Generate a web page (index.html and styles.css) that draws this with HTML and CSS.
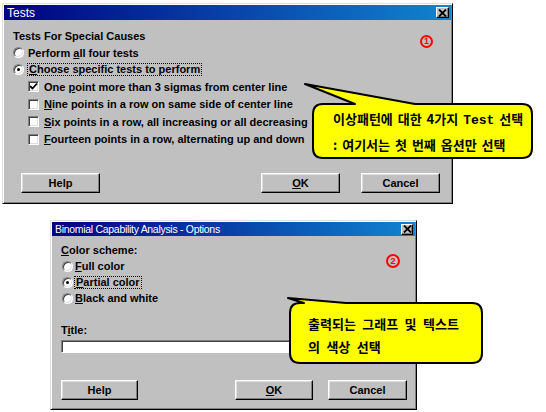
FILE: index.html
```html
<!DOCTYPE html>
<html>
<head>
<meta charset="utf-8">
<link rel="stylesheet" href="styles.css">
</head>
<body>
<div class="page">
  <div class="dlg dlg1">
    <div class="titlebar tb1">
      <span class="ttl">Tests</span>
      <span class="xbtn"><svg width="9" height="8" viewBox="0 0 9 8"><path d="M1 0.5 L8 7.5 M8 0.5 L1 7.5" stroke="#000" stroke-width="1.8"/></svg></span>
    </div>
    <div class="body body1">
      <div class="row hdr">Tests For Special Causes</div>
      <div class="row"><span class="radio"></span><span>Perform <u>a</u>ll four tests</span></div>
      <div class="row"><span class="radio on"></span><span class="focus"><u>C</u>hoose specific tests to perform</span></div>
      <div class="checks">
        <div class="crow"><span class="cb"><svg width="9" height="9" viewBox="0 0 9 9"><path d="M1 4 L3.5 6.5 L8 1.5" stroke="#000" stroke-width="1.8" fill="none"/></svg></span><span>One <u>p</u>oint more than 3 sigmas from center line</span></div>
        <div class="crow"><span class="cb"></span><span><u>N</u>ine points in a row on same side of center line</span></div>
        <div class="crow"><span class="cb"></span><span><u>S</u>ix points in a row, all increasing or all decreasing</span></div>
        <div class="crow"><span class="cb"></span><span><u>F</u>ourteen points in a row, alternating up and down</span></div>
      </div>
      <div class="btns btns1">
        <span class="btn help1">Help</span>
        <span class="spacer"></span>
        <span class="btn"><u>O</u>K</span>
        <span class="btn cancel1">Cancel</span>
      </div>
    </div>
  </div>

  <div class="dlg dlg2">
    <div class="titlebar tb2">
      <span class="ttl ttl2">Binomial Capability Analysis - Options</span>
      <span class="xbtn xbtn2"><svg width="9" height="8" viewBox="0 0 9 8"><path d="M1 0.5 L8 7.5 M8 0.5 L1 7.5" stroke="#000" stroke-width="1.8"/></svg></span>
    </div>
    <div class="body body2">
      <div class="row2"><span><u>C</u>olor scheme:</span></div>
      <div class="row2"><span class="radio"></span><span><u>F</u>ull color</span></div>
      <div class="row2"><span class="radio on"></span><span class="focus"><u>P</u>artial color</span></div>
      <div class="row2"><span class="radio"></span><span><u>B</u>lack and white</span></div>
      <div class="row2 titlelbl"><span>T<u>i</u>tle:</span></div>
      <div class="input"></div>
      <div class="btns btns2">
        <span class="btn help2">Help</span>
        <span class="spacer"></span>
        <span class="btn ok2"><u>O</u>K</span>
        <span class="btn cancel2">Cancel</span>
      </div>
    </div>
  </div>

  <span class="num n1">1</span>
  <span class="num n2">2</span>

  <div class="callout c1">
    <svg class="shape" width="233" height="80" viewBox="0 0 233 80">
      <path d="M20 22 L52 22 L2 2 L112 22 L219 22 Q229 22 229 32 L229 66 Q229 76 219 76 L20 76 Q10 76 10 66 L10 32 Q10 22 20 22 Z" fill="#ffff00" stroke="#000" stroke-width="2" stroke-linejoin="round"/>
    </svg>
    <div class="ctext ctext1">
      <div>이상패턴에 대한 4가지 <span class="mono">Test</span> 선택</div>
      <div>: 여기서는 첫 번째 옵션만 선택</div>
    </div>
  </div>

  <div class="callout c2">
    <svg class="shape" width="200" height="70" viewBox="0 0 200 70">
      <path d="M14 7 L18 7 L2 2 L60 7 L186 7 Q196 7 196 17 L196 57 Q196 67 186 67 L14 67 Q4 67 4 57 L4 17 Q4 7 14 7 Z" fill="#ffff00" stroke="#000" stroke-width="2" stroke-linejoin="round"/>
    </svg>
    <div class="ctext ctext2">
      <div>출력되는 그래프 및 텍스트</div>
      <div>의 색상 선택</div>
    </div>
  </div>
</div>
</body>
</html>
```

FILE: styles.css
```css
* { box-sizing: border-box; }
html, body { margin: 0; padding: 0; background: #fff; }
body {
  width: 546px;
  height: 412px;
  overflow: hidden;
  font-family: "Liberation Sans", Arial, sans-serif;
  font-size: 11px;
  font-weight: bold;
  color: #000;
}
.page { position: relative; width: 546px; height: 412px; padding-top: 3px; }
u { text-decoration: underline; text-underline-offset: 1px; }

.dlg {
  background: #c0c0c0;
  border: 1px solid;
  border-color: #dfdfdf #000 #000 #dfdfdf;
  box-shadow: inset 1px 1px #fff, inset -1px -1px #808080;
  padding: 1px;
  display: flex;
  flex-direction: column;
}
.dlg1 { margin-left: 2px; width: 451px; height: 201px; }
.dlg2 { margin-left: 50px; margin-top: 16px; width: 367px; height: 190px; }

.titlebar {
  display: flex;
  align-items: center;
  justify-content: space-between;
  background: linear-gradient(to right, #000080, #1084d0);
  color: #fff;
  padding: 0 2px 0 3px;
}
.tb1 { height: 15px; }
.tb2 { height: 14px; }
.ttl { font-weight: normal; font-size: 12px; line-height: 14px; }
.ttl2 { font-size: 10.5px; letter-spacing: -0.3px; }
.xbtn {
  width: 13px; height: 11px;
  background: #c0c0c0;
  border: 1px solid;
  border-color: #fff #000 #000 #fff;
  box-shadow: inset -1px -1px #808080;
  display: flex; align-items: center; justify-content: center;
}
.xbtn2 { width: 12px; height: 11px; }

.body { flex: 1; display: flex; flex-direction: column; }
.body1 { padding: 7px 11px 9px 9px; }
.body2 { padding: 6px 8px 8px 9px; }

.row { height: 17px; display: flex; align-items: center; }
.row .radio { margin-right: 4px; }
.radio {
  width: 11px; height: 11px; border-radius: 50%;
  background: #fff;
  border: 1px solid;
  border-color: #808080 #fff #fff #808080;
  box-shadow: inset 1px 1px #404040, inset -1px -1px #dfdfdf;
  position: relative;
  flex: none;
}
.radio.on::after {
  content: "";
  position: absolute;
  left: 3px; top: 3px;
  width: 3px; height: 3px;
  border-radius: 50%;
  background: #000;
}
.focus { outline: 1px dotted #000; outline-offset: 0; padding: 0 1px; line-height: 11px; }

.checks { display: flex; flex-direction: column; padding-left: 15px; }
.crow { height: 17.5px; display: flex; align-items: center; }
.cb {
  width: 11px; height: 11px;
  background: #fff;
  border: 1px solid;
  border-color: #808080 #fff #fff #808080;
  box-shadow: inset 1px 1px #404040, inset -1px -1px #dfdfdf;
  margin-right: 5px;
  flex: none;
  display: flex; align-items: center; justify-content: center;
}

.btns { margin-top: auto; display: flex; }
.btns1 { padding-left: 8px; }
.btns1 .btn { width: 79px; }
.btns1 .cancel1 { margin-left: 21px; }
.btn {
  height: 20px;
  display: flex; align-items: center; justify-content: center;
  background: #c0c0c0;
  border: 1px solid;
  border-color: #fff #000 #000 #fff;
  box-shadow: inset -1px -1px #808080, inset 1px 1px #dfdfdf;
  font-size: 11px;
}
.spacer { flex: 1; }

.row2 { height: 16px; display: flex; align-items: center; }
.row2 .radio { margin-left: 1px; margin-right: 2px; }
.titlelbl { margin-top: 16px; }
.input {
  margin-top: 2px;
  height: 13px;
  width: 345px;
  background: #fff;
  border: 1px solid;
  border-color: #808080 #fff #fff #808080;
  box-shadow: inset 1px 1px #404040;
}
.help2 { width: 77px; }
.ok2 { width: 78px; }
.cancel2 { width: 79px; margin-left: 15px; }

.num {
  position: absolute;
  width: 13px; height: 13px;
  border: 2px solid #f00;
  border-radius: 50%;
  color: #f00;
  font-size: 9px;
  font-weight: bold;
  display: flex; align-items: center; justify-content: center;
  line-height: 1;
}
.n1 { left: 420px; top: 35px; }
.n2 { left: 386px; top: 254px; width: 14px; height: 14px; }

.callout { position: absolute; }
.c1 { left: 303px; top: 82px; width: 233px; height: 80px; }
.c2 { left: 286px; top: 296px; width: 200px; height: 70px; }
.shape { position: absolute; left: 0; top: 0; }
.ctext {
  position: relative;
  font-family: "Noto Sans CJK KR", "Liberation Sans", sans-serif;
  font-weight: bold;
  font-size: 13px;
  color: #000;
  white-space: nowrap;
}
.ctext1 { padding: 25px 0 0 30px; line-height: 24px; word-spacing: 2px; }
.ctext2 { padding: 15.5px 0 0 22px; line-height: 23px; word-spacing: 3.5px; }
.mono { font-family: "Liberation Mono", monospace; }
```
